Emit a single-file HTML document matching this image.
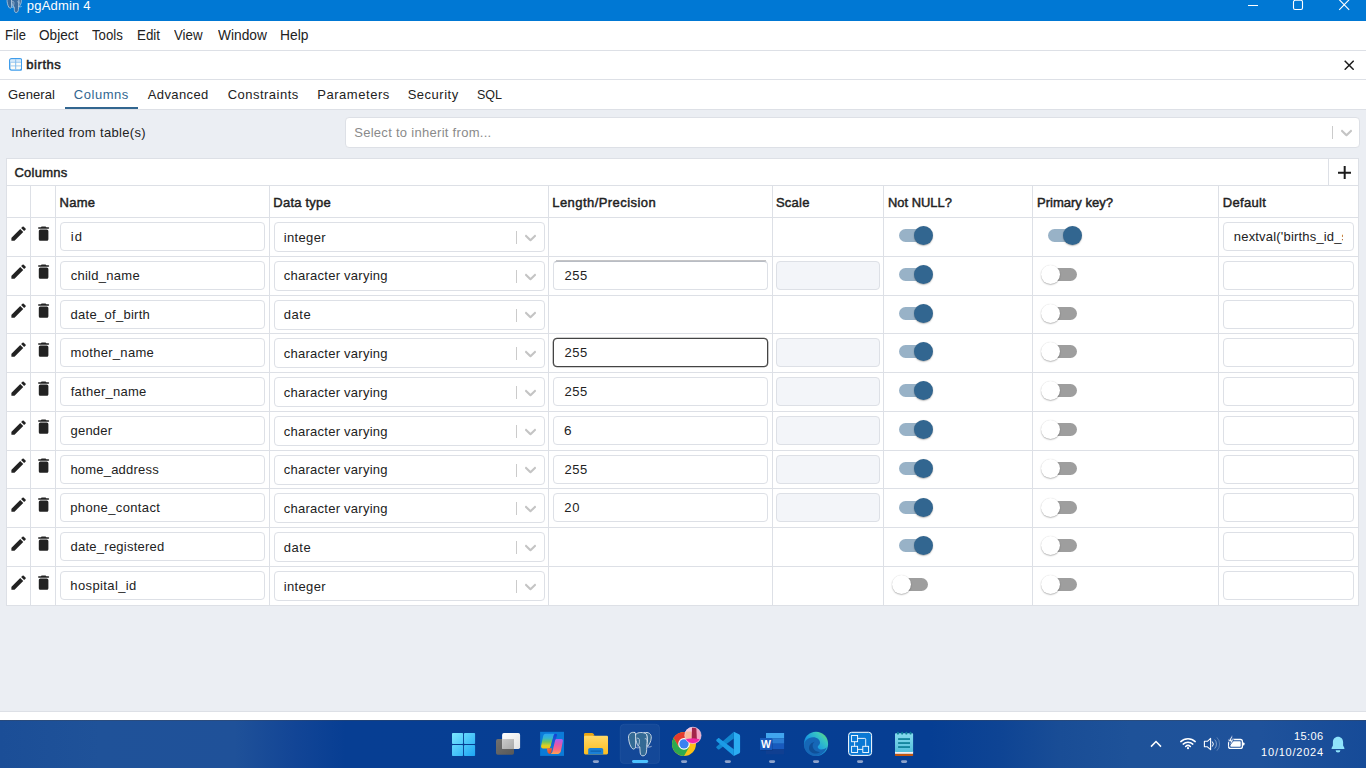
<!DOCTYPE html>
<html lang="en"><head><meta charset="utf-8"><title>pgAdmin 4</title>
<style>
*{box-sizing:border-box;margin:0;padding:0}
html,body{width:1366px;height:768px;overflow:hidden;background:#fff}
body{position:relative;font-family:"Liberation Sans",sans-serif;font-size:13px;color:#222}
.abs,.ic,.hl,.vl,.inp,.trk,.thb,.t{position:absolute}
.t{white-space:nowrap;line-height:1;transform-origin:0 0}
.ttl{font-size:13px;color:#fff}
.menu{font-size:14px;color:#222}
.dt{font-size:13px;font-weight:normal;-webkit-text-stroke:.5px #222;color:#222}
.tab{font-size:13px;color:#222}
.b{font-size:13px;color:#222}
.h{font-size:13px;font-weight:normal;-webkit-text-stroke:.45px #222;color:#222}
.clk{font-size:11px;color:#fff}
#titlebar{position:absolute;left:0;top:0;width:1366px;height:21px;background:#0078d4}
#menubar{position:absolute;left:0;top:21px;width:1366px;height:30px;background:#fff;border-bottom:1px solid #dde0e6}
#dlgtitle{position:absolute;left:0;top:51px;width:1366px;height:29px;background:#fff;border-bottom:1px solid #dde0e6}
#tabs{position:absolute;left:0;top:80px;width:1366px;height:30px;background:#fff;border-bottom:1px solid #dde0e6}
#content{position:absolute;left:0;top:110px;width:1366px;height:601px;background:#ebeef3}
#footline{position:absolute;left:0;top:711px;width:1366px;height:1px;background:#dde0e6}
#taskbar{position:absolute;left:0;top:720px;width:1366px;height:48px;box-shadow:inset 0 1px 0 rgba(60,70,90,.45);background:linear-gradient(90deg,#1b4e97 0px,#1f5299 100px,#1f5199 235px,#124596 295px,#073e93 345px,#063e93 930px,#0e4494 1000px,#194d96 1060px,#1e5299 1130px,#1f529b 1260px,#164b98 1366px)}
#panel{position:absolute;left:6px;top:158px;width:1353px;height:448px;background:#fff;border:1px solid #dde0e6}
.hl{left:7px;width:1351px;height:1px;background:#dde0e6}
.vl{width:1px;background:#dde0e6;top:186px;height:419px}
.inp{height:29px;background:#fff;border:1px solid #dde0e6;border-radius:4px;overflow:hidden}
.inp.dis{background:#f3f5f9}
.inp.foc{border:1px solid #444;box-shadow:0 0 0 .3px #444}
.inp.hov{border-top-color:#b8bcc4}
.sep{position:absolute;top:8px;width:1px;height:13px;background:#cbcbcb}
.trk{width:29px;height:13px;border-radius:7px}
.trk.on{background:#98b2c7}
.trk.off{background:#9e9e9e}
.thb{width:19px;height:19px;border-radius:50%;box-shadow:0 1px 1.500px rgba(0,0,0,.26),0 0 1px rgba(0,0,0,.14)}
.thb.on{background:#326690}
.thb.off{background:#fff}

</style></head><body>
<div id="titlebar">
 <svg class="abs" style="left:0;top:0" width="26" height="15" viewBox="0 0 26 15"><g transform="translate(1.720 -7.540) scale(.03275)" stroke="#c9d8e8" stroke-width="22" fill="#3a6a9c" stroke-linejoin="round" stroke-linecap="round">
<path d="M470 170C540 140 610 190 600 270C595 340 560 400 530 430L515 400C525 330 530 260 510 200C500 185 485 175 470 170Z"/>
<path d="M285 165C220 140 150 190 165 280C175 370 205 450 245 478C270 490 295 470 300 440L300 200C300 180 295 170 285 165Z"/>
<path d="M300 200C330 150 470 150 510 200C530 260 525 330 515 400C510 440 515 470 510 520C505 580 480 612 440 612C400 612 385 575 385 520L380 440C350 430 330 400 320 360C305 310 295 250 300 200Z"/>
<path d="M520 440C550 446 580 442 600 432M330 272C352 262 376 282 373 330C371 380 362 410 346 426M482 282C502 272 530 292 524 332M305 448C325 462 350 462 368 452" fill="none" stroke-width="18"/>
</g></svg>
 <svg class="abs" style="left:1246px;top:0" width="110" height="14" viewBox="0 0 110 14"><path d="M2 5.500h10" stroke="#fff" stroke-width="1"/><rect x="47.500" y=".3" width="9" height="9.200" rx="1.600" fill="none" stroke="#fff" stroke-width="1.100"/><path d="M93.200 -.4l10 10.200M103.200 -.4l-10 10.200" stroke="#fff" stroke-width="1.100"/></svg>
</div>
<div id="menubar"></div>
<div id="dlgtitle"></div>
<svg class="abs" style="left:8.8px;top:58.1px" width="13.400" height="12.800" viewBox="0 0 13.400 12.800"><rect x=".7" y=".7" width="12" height="11.400" rx="1.800" fill="#fdfcf8" stroke="#3f9deb" stroke-width="1.400"/><rect x="1.400" y="1.400" width="10.600" height="2.600" fill="#d6eafb"/><path d="M1.400 4.300h10.600M1.400 7.900h10.600" stroke="#9ccaf0" stroke-width="1"/><path d="M6.700 1.400v10" stroke="#7fbbee" stroke-width="1"/></svg>
<svg class="abs" style="left:1344px;top:59.8px" width="10.400" height="10.400" viewBox="0 0 10.400 10.400"><path d="M.7.7l9 9M9.700.7l-9 9" stroke="#1c1c1c" stroke-width="1.500"/></svg>
<div id="tabs"></div>
<div class="abs" style="left:65px;top:107px;width:73px;height:2px;background:#326690"></div>
<div id="content"></div>
<div class="inp" style="left:345px;top:117px;width:1014.5px;height:30.5px"><i class="sep" style="left:986px;top:8px"></i><svg class="ic" style="left:991px;top:5px" width="19" height="19" viewBox="0 0 20 20"><path fill="#c4c4c4" d="M4.516 7.548c0.436-0.446 1.043-0.481 1.576 0l3.908 3.747 3.908-3.747c0.533-0.481 1.141-0.446 1.574 0 0.436 0.445 0.408 1.197 0 1.615-0.406 0.418-4.695 4.502-4.695 4.502-0.217 0.223-0.502 0.335-0.787 0.335s-0.570-0.112-0.789-0.335c0 0-4.287-4.084-4.695-4.502s-0.436-1.170 0-1.615z"/></svg></div>
<div id="panel"></div>
<div class="hl" style="top:185px"></div>
<div class="abs" style="left:1328px;top:159px;width:1px;height:26px;background:#dde0e6"></div>
<svg class="abs" style="left:1337.6px;top:165.7px" width="13.400" height="13.400" viewBox="0 0 13.400 13.400"><path d="M6.700 0v13.400M0 6.700h13.400" stroke="#1c1c1c" stroke-width="2"/></svg>
<div class="vl" style="left:30px"></div><div class="vl" style="left:55px"></div><div class="vl" style="left:269px"></div><div class="vl" style="left:548px"></div><div class="vl" style="left:772px"></div><div class="vl" style="left:883px"></div><div class="vl" style="left:1032px"></div><div class="vl" style="left:1218px"></div>
<div class="hl" style="top:217.00px"></div>
<svg class="ic" style="left:8.5px;top:223.60px" width="19.200" height="19.200" viewBox="0 0 24 24"><path fill="#222" d="M3 17.46v3.04c0 .28.22.5.5.5h3.04c.13 0 .26-.05.35-.15L17.81 9.940l-3.750-3.750L3.150 17.100c-.1.1-.15.22-.15.36zM20.710 7.040c.39-.39.39-1.020 0-1.410l-2.340-2.340c-.39-.39-1.020-.39-1.410 0l-1.830 1.830 3.750 3.750 1.830-1.830z"/></svg>
<svg class="ic" style="left:33.9px;top:223.50px" width="19.200" height="19.200" viewBox="0 0 24 24"><path fill="#222" d="M6 19c0 1.100.9 2 2 2h8c1.100 0 2-.9 2-2V9c0-1.100-.9-2-2-2H8c-1.100 0-2 .9-2 2v10zM18 4h-2.500l-.71-.71c-.18-.18-.44-.29-.7-.29H9.910c-.26 0-.52.11-.7.29L8.500 4H6c-.55 0-1 .45-1 1s.45 1 1 1h12c.55 0 1-.45 1-1s-.45-1-1-1z"/></svg>
<div class="inp" style="left:60px;top:222.00px;width:205px"></div>
<div class="inp" style="left:274px;top:222.00px;width:271px;height:30px"><i class="sep" style="left:241px"></i><svg class="ic" style="left:246px;top:4.8px" width="19" height="19" viewBox="0 0 20 20"><path fill="#c4c4c4" d="M4.516 7.548c0.436-0.446 1.043-0.481 1.576 0l3.908 3.747 3.908-3.747c0.533-0.481 1.141-0.446 1.574 0 0.436 0.445 0.408 1.197 0 1.615-0.406 0.418-4.695 4.502-4.695 4.502-0.217 0.223-0.502 0.335-0.787 0.335s-0.570-0.112-0.789-0.335c0 0-4.287-4.084-4.695-4.502s-0.436-1.170 0-1.615z"/></svg></div>
<div class="trk on" style="left:899px;top:229.10px"></div><div class="thb on" style="left:914.1px;top:226.10px"></div>
<div class="trk on" style="left:1048px;top:229.10px"></div><div class="thb on" style="left:1063.1px;top:226.10px"></div>
<div class="inp" style="left:1223px;top:222.00px;width:131px"></div>
<div class="hl" style="top:255.78px"></div>
<svg class="ic" style="left:8.5px;top:262.38px" width="19.200" height="19.200" viewBox="0 0 24 24"><path fill="#222" d="M3 17.46v3.04c0 .28.22.5.5.5h3.04c.13 0 .26-.05.35-.15L17.81 9.940l-3.750-3.750L3.150 17.100c-.1.1-.15.22-.15.36zM20.710 7.040c.39-.39.39-1.020 0-1.410l-2.340-2.340c-.39-.39-1.020-.39-1.410 0l-1.830 1.830 3.750 3.750 1.830-1.830z"/></svg>
<svg class="ic" style="left:33.9px;top:262.28px" width="19.200" height="19.200" viewBox="0 0 24 24"><path fill="#222" d="M6 19c0 1.100.9 2 2 2h8c1.100 0 2-.9 2-2V9c0-1.100-.9-2-2-2H8c-1.100 0-2 .9-2 2v10zM18 4h-2.500l-.71-.71c-.18-.18-.44-.29-.7-.29H9.910c-.26 0-.52.11-.7.29L8.500 4H6c-.55 0-1 .45-1 1s.45 1 1 1h12c.55 0 1-.45 1-1s-.45-1-1-1z"/></svg>
<div class="inp" style="left:60px;top:260.78px;width:205px"></div>
<div class="inp" style="left:274px;top:260.78px;width:271px;height:30px"><i class="sep" style="left:241px"></i><svg class="ic" style="left:246px;top:4.8px" width="19" height="19" viewBox="0 0 20 20"><path fill="#c4c4c4" d="M4.516 7.548c0.436-0.446 1.043-0.481 1.576 0l3.908 3.747 3.908-3.747c0.533-0.481 1.141-0.446 1.574 0 0.436 0.445 0.408 1.197 0 1.615-0.406 0.418-4.695 4.502-4.695 4.502-0.217 0.223-0.502 0.335-0.787 0.335s-0.570-0.112-0.789-0.335c0 0-4.287-4.084-4.695-4.502s-0.436-1.170 0-1.615z"/></svg></div>
<div class="inp hov" style="left:553px;top:260.78px;width:215px"></div>
<div class="abs" style="left:556px;top:259.98px;width:210px;height:1px;background:#c4c4c6"></div>
<div class="inp dis" style="left:776px;top:260.78px;width:104px"></div>
<div class="trk on" style="left:899px;top:267.88px"></div><div class="thb on" style="left:914.1px;top:264.88px"></div>
<div class="trk off" style="left:1048px;top:267.88px"></div><div class="thb off" style="left:1040.8px;top:264.88px"></div>
<div class="inp" style="left:1223px;top:260.78px;width:131px"></div>
<div class="hl" style="top:294.56px"></div>
<svg class="ic" style="left:8.5px;top:301.16px" width="19.200" height="19.200" viewBox="0 0 24 24"><path fill="#222" d="M3 17.46v3.04c0 .28.22.5.5.5h3.04c.13 0 .26-.05.35-.15L17.81 9.940l-3.750-3.750L3.150 17.100c-.1.1-.15.22-.15.36zM20.710 7.040c.39-.39.39-1.020 0-1.410l-2.340-2.340c-.39-.39-1.020-.39-1.410 0l-1.830 1.830 3.750 3.750 1.830-1.830z"/></svg>
<svg class="ic" style="left:33.9px;top:301.06px" width="19.200" height="19.200" viewBox="0 0 24 24"><path fill="#222" d="M6 19c0 1.100.9 2 2 2h8c1.100 0 2-.9 2-2V9c0-1.100-.9-2-2-2H8c-1.100 0-2 .9-2 2v10zM18 4h-2.500l-.71-.71c-.18-.18-.44-.29-.7-.29H9.910c-.26 0-.52.11-.7.29L8.500 4H6c-.55 0-1 .45-1 1s.45 1 1 1h12c.55 0 1-.45 1-1s-.45-1-1-1z"/></svg>
<div class="inp" style="left:60px;top:299.56px;width:205px"></div>
<div class="inp" style="left:274px;top:299.56px;width:271px;height:30px"><i class="sep" style="left:241px"></i><svg class="ic" style="left:246px;top:4.8px" width="19" height="19" viewBox="0 0 20 20"><path fill="#c4c4c4" d="M4.516 7.548c0.436-0.446 1.043-0.481 1.576 0l3.908 3.747 3.908-3.747c0.533-0.481 1.141-0.446 1.574 0 0.436 0.445 0.408 1.197 0 1.615-0.406 0.418-4.695 4.502-4.695 4.502-0.217 0.223-0.502 0.335-0.787 0.335s-0.570-0.112-0.789-0.335c0 0-4.287-4.084-4.695-4.502s-0.436-1.170 0-1.615z"/></svg></div>
<div class="trk on" style="left:899px;top:306.66px"></div><div class="thb on" style="left:914.1px;top:303.66px"></div>
<div class="trk off" style="left:1048px;top:306.66px"></div><div class="thb off" style="left:1040.8px;top:303.66px"></div>
<div class="inp" style="left:1223px;top:299.56px;width:131px"></div>
<div class="hl" style="top:333.34px"></div>
<svg class="ic" style="left:8.5px;top:339.94px" width="19.200" height="19.200" viewBox="0 0 24 24"><path fill="#222" d="M3 17.46v3.04c0 .28.22.5.5.5h3.04c.13 0 .26-.05.35-.15L17.81 9.940l-3.750-3.750L3.150 17.100c-.1.1-.15.22-.15.36zM20.710 7.040c.39-.39.39-1.020 0-1.410l-2.340-2.340c-.39-.39-1.020-.39-1.410 0l-1.830 1.830 3.750 3.750 1.830-1.830z"/></svg>
<svg class="ic" style="left:33.9px;top:339.84px" width="19.200" height="19.200" viewBox="0 0 24 24"><path fill="#222" d="M6 19c0 1.100.9 2 2 2h8c1.100 0 2-.9 2-2V9c0-1.100-.9-2-2-2H8c-1.100 0-2 .9-2 2v10zM18 4h-2.500l-.71-.71c-.18-.18-.44-.29-.7-.29H9.910c-.26 0-.52.11-.7.29L8.500 4H6c-.55 0-1 .45-1 1s.45 1 1 1h12c.55 0 1-.45 1-1s-.45-1-1-1z"/></svg>
<div class="inp" style="left:60px;top:338.34px;width:205px"></div>
<div class="inp" style="left:274px;top:338.34px;width:271px;height:30px"><i class="sep" style="left:241px"></i><svg class="ic" style="left:246px;top:4.8px" width="19" height="19" viewBox="0 0 20 20"><path fill="#c4c4c4" d="M4.516 7.548c0.436-0.446 1.043-0.481 1.576 0l3.908 3.747 3.908-3.747c0.533-0.481 1.141-0.446 1.574 0 0.436 0.445 0.408 1.197 0 1.615-0.406 0.418-4.695 4.502-4.695 4.502-0.217 0.223-0.502 0.335-0.787 0.335s-0.570-0.112-0.789-0.335c0 0-4.287-4.084-4.695-4.502s-0.436-1.170 0-1.615z"/></svg></div>
<div class="inp foc" style="left:553px;top:338.34px;width:215px"></div>
<div class="inp dis" style="left:776px;top:338.34px;width:104px"></div>
<div class="trk on" style="left:899px;top:345.44px"></div><div class="thb on" style="left:914.1px;top:342.44px"></div>
<div class="trk off" style="left:1048px;top:345.44px"></div><div class="thb off" style="left:1040.8px;top:342.44px"></div>
<div class="inp" style="left:1223px;top:338.34px;width:131px"></div>
<div class="hl" style="top:372.12px"></div>
<svg class="ic" style="left:8.5px;top:378.72px" width="19.200" height="19.200" viewBox="0 0 24 24"><path fill="#222" d="M3 17.46v3.04c0 .28.22.5.5.5h3.04c.13 0 .26-.05.35-.15L17.81 9.940l-3.750-3.750L3.150 17.100c-.1.1-.15.22-.15.36zM20.710 7.040c.39-.39.39-1.020 0-1.410l-2.340-2.340c-.39-.39-1.020-.39-1.410 0l-1.830 1.830 3.750 3.750 1.830-1.830z"/></svg>
<svg class="ic" style="left:33.9px;top:378.62px" width="19.200" height="19.200" viewBox="0 0 24 24"><path fill="#222" d="M6 19c0 1.100.9 2 2 2h8c1.100 0 2-.9 2-2V9c0-1.100-.9-2-2-2H8c-1.100 0-2 .9-2 2v10zM18 4h-2.500l-.71-.71c-.18-.18-.44-.29-.7-.29H9.910c-.26 0-.52.11-.7.29L8.500 4H6c-.55 0-1 .45-1 1s.45 1 1 1h12c.55 0 1-.45 1-1s-.45-1-1-1z"/></svg>
<div class="inp" style="left:60px;top:377.12px;width:205px"></div>
<div class="inp" style="left:274px;top:377.12px;width:271px;height:30px"><i class="sep" style="left:241px"></i><svg class="ic" style="left:246px;top:4.8px" width="19" height="19" viewBox="0 0 20 20"><path fill="#c4c4c4" d="M4.516 7.548c0.436-0.446 1.043-0.481 1.576 0l3.908 3.747 3.908-3.747c0.533-0.481 1.141-0.446 1.574 0 0.436 0.445 0.408 1.197 0 1.615-0.406 0.418-4.695 4.502-4.695 4.502-0.217 0.223-0.502 0.335-0.787 0.335s-0.570-0.112-0.789-0.335c0 0-4.287-4.084-4.695-4.502s-0.436-1.170 0-1.615z"/></svg></div>
<div class="inp" style="left:553px;top:377.12px;width:215px"></div>
<div class="inp dis" style="left:776px;top:377.12px;width:104px"></div>
<div class="trk on" style="left:899px;top:384.22px"></div><div class="thb on" style="left:914.1px;top:381.22px"></div>
<div class="trk off" style="left:1048px;top:384.22px"></div><div class="thb off" style="left:1040.8px;top:381.22px"></div>
<div class="inp" style="left:1223px;top:377.12px;width:131px"></div>
<div class="hl" style="top:410.90px"></div>
<svg class="ic" style="left:8.5px;top:417.50px" width="19.200" height="19.200" viewBox="0 0 24 24"><path fill="#222" d="M3 17.46v3.04c0 .28.22.5.5.5h3.04c.13 0 .26-.05.35-.15L17.81 9.940l-3.750-3.750L3.150 17.100c-.1.1-.15.22-.15.36zM20.710 7.040c.39-.39.39-1.020 0-1.410l-2.340-2.340c-.39-.39-1.020-.39-1.410 0l-1.830 1.830 3.750 3.750 1.830-1.830z"/></svg>
<svg class="ic" style="left:33.9px;top:417.40px" width="19.200" height="19.200" viewBox="0 0 24 24"><path fill="#222" d="M6 19c0 1.100.9 2 2 2h8c1.100 0 2-.9 2-2V9c0-1.100-.9-2-2-2H8c-1.100 0-2 .9-2 2v10zM18 4h-2.500l-.71-.71c-.18-.18-.44-.29-.7-.29H9.910c-.26 0-.52.11-.7.29L8.500 4H6c-.55 0-1 .45-1 1s.45 1 1 1h12c.55 0 1-.45 1-1s-.45-1-1-1z"/></svg>
<div class="inp" style="left:60px;top:415.90px;width:205px"></div>
<div class="inp" style="left:274px;top:415.90px;width:271px;height:30px"><i class="sep" style="left:241px"></i><svg class="ic" style="left:246px;top:4.8px" width="19" height="19" viewBox="0 0 20 20"><path fill="#c4c4c4" d="M4.516 7.548c0.436-0.446 1.043-0.481 1.576 0l3.908 3.747 3.908-3.747c0.533-0.481 1.141-0.446 1.574 0 0.436 0.445 0.408 1.197 0 1.615-0.406 0.418-4.695 4.502-4.695 4.502-0.217 0.223-0.502 0.335-0.787 0.335s-0.570-0.112-0.789-0.335c0 0-4.287-4.084-4.695-4.502s-0.436-1.170 0-1.615z"/></svg></div>
<div class="inp" style="left:553px;top:415.90px;width:215px"></div>
<div class="inp dis" style="left:776px;top:415.90px;width:104px"></div>
<div class="trk on" style="left:899px;top:423.00px"></div><div class="thb on" style="left:914.1px;top:420.00px"></div>
<div class="trk off" style="left:1048px;top:423.00px"></div><div class="thb off" style="left:1040.8px;top:420.00px"></div>
<div class="inp" style="left:1223px;top:415.90px;width:131px"></div>
<div class="hl" style="top:449.68px"></div>
<svg class="ic" style="left:8.5px;top:456.28px" width="19.200" height="19.200" viewBox="0 0 24 24"><path fill="#222" d="M3 17.46v3.04c0 .28.22.5.5.5h3.04c.13 0 .26-.05.35-.15L17.81 9.940l-3.750-3.750L3.150 17.100c-.1.1-.15.22-.15.36zM20.710 7.040c.39-.39.39-1.020 0-1.410l-2.340-2.340c-.39-.39-1.020-.39-1.410 0l-1.830 1.830 3.750 3.750 1.830-1.830z"/></svg>
<svg class="ic" style="left:33.9px;top:456.18px" width="19.200" height="19.200" viewBox="0 0 24 24"><path fill="#222" d="M6 19c0 1.100.9 2 2 2h8c1.100 0 2-.9 2-2V9c0-1.100-.9-2-2-2H8c-1.100 0-2 .9-2 2v10zM18 4h-2.500l-.71-.71c-.18-.18-.44-.29-.7-.29H9.910c-.26 0-.52.11-.7.29L8.500 4H6c-.55 0-1 .45-1 1s.45 1 1 1h12c.55 0 1-.45 1-1s-.45-1-1-1z"/></svg>
<div class="inp" style="left:60px;top:454.68px;width:205px"></div>
<div class="inp" style="left:274px;top:454.68px;width:271px;height:30px"><i class="sep" style="left:241px"></i><svg class="ic" style="left:246px;top:4.8px" width="19" height="19" viewBox="0 0 20 20"><path fill="#c4c4c4" d="M4.516 7.548c0.436-0.446 1.043-0.481 1.576 0l3.908 3.747 3.908-3.747c0.533-0.481 1.141-0.446 1.574 0 0.436 0.445 0.408 1.197 0 1.615-0.406 0.418-4.695 4.502-4.695 4.502-0.217 0.223-0.502 0.335-0.787 0.335s-0.570-0.112-0.789-0.335c0 0-4.287-4.084-4.695-4.502s-0.436-1.170 0-1.615z"/></svg></div>
<div class="inp" style="left:553px;top:454.68px;width:215px"></div>
<div class="inp dis" style="left:776px;top:454.68px;width:104px"></div>
<div class="trk on" style="left:899px;top:461.78px"></div><div class="thb on" style="left:914.1px;top:458.78px"></div>
<div class="trk off" style="left:1048px;top:461.78px"></div><div class="thb off" style="left:1040.8px;top:458.78px"></div>
<div class="inp" style="left:1223px;top:454.68px;width:131px"></div>
<div class="hl" style="top:488.46px"></div>
<svg class="ic" style="left:8.5px;top:495.06px" width="19.200" height="19.200" viewBox="0 0 24 24"><path fill="#222" d="M3 17.46v3.04c0 .28.22.5.5.5h3.04c.13 0 .26-.05.35-.15L17.81 9.940l-3.750-3.750L3.150 17.100c-.1.1-.15.22-.15.36zM20.710 7.040c.39-.39.39-1.020 0-1.410l-2.340-2.340c-.39-.39-1.020-.39-1.410 0l-1.830 1.830 3.750 3.750 1.830-1.830z"/></svg>
<svg class="ic" style="left:33.9px;top:494.96px" width="19.200" height="19.200" viewBox="0 0 24 24"><path fill="#222" d="M6 19c0 1.100.9 2 2 2h8c1.100 0 2-.9 2-2V9c0-1.100-.9-2-2-2H8c-1.100 0-2 .9-2 2v10zM18 4h-2.500l-.71-.71c-.18-.18-.44-.29-.7-.29H9.910c-.26 0-.52.11-.7.29L8.500 4H6c-.55 0-1 .45-1 1s.45 1 1 1h12c.55 0 1-.45 1-1s-.45-1-1-1z"/></svg>
<div class="inp" style="left:60px;top:493.46px;width:205px"></div>
<div class="inp" style="left:274px;top:493.46px;width:271px;height:30px"><i class="sep" style="left:241px"></i><svg class="ic" style="left:246px;top:4.8px" width="19" height="19" viewBox="0 0 20 20"><path fill="#c4c4c4" d="M4.516 7.548c0.436-0.446 1.043-0.481 1.576 0l3.908 3.747 3.908-3.747c0.533-0.481 1.141-0.446 1.574 0 0.436 0.445 0.408 1.197 0 1.615-0.406 0.418-4.695 4.502-4.695 4.502-0.217 0.223-0.502 0.335-0.787 0.335s-0.570-0.112-0.789-0.335c0 0-4.287-4.084-4.695-4.502s-0.436-1.170 0-1.615z"/></svg></div>
<div class="inp" style="left:553px;top:493.46px;width:215px"></div>
<div class="inp dis" style="left:776px;top:493.46px;width:104px"></div>
<div class="trk on" style="left:899px;top:500.56px"></div><div class="thb on" style="left:914.1px;top:497.56px"></div>
<div class="trk off" style="left:1048px;top:500.56px"></div><div class="thb off" style="left:1040.8px;top:497.56px"></div>
<div class="inp" style="left:1223px;top:493.46px;width:131px"></div>
<div class="hl" style="top:527.24px"></div>
<svg class="ic" style="left:8.5px;top:533.84px" width="19.200" height="19.200" viewBox="0 0 24 24"><path fill="#222" d="M3 17.46v3.04c0 .28.22.5.5.5h3.04c.13 0 .26-.05.35-.15L17.81 9.940l-3.750-3.750L3.150 17.100c-.1.1-.15.22-.15.36zM20.710 7.040c.39-.39.39-1.020 0-1.410l-2.340-2.340c-.39-.39-1.020-.39-1.410 0l-1.830 1.830 3.750 3.750 1.830-1.830z"/></svg>
<svg class="ic" style="left:33.9px;top:533.74px" width="19.200" height="19.200" viewBox="0 0 24 24"><path fill="#222" d="M6 19c0 1.100.9 2 2 2h8c1.100 0 2-.9 2-2V9c0-1.100-.9-2-2-2H8c-1.100 0-2 .9-2 2v10zM18 4h-2.500l-.71-.71c-.18-.18-.44-.29-.7-.29H9.910c-.26 0-.52.11-.7.29L8.500 4H6c-.55 0-1 .45-1 1s.45 1 1 1h12c.55 0 1-.45 1-1s-.45-1-1-1z"/></svg>
<div class="inp" style="left:60px;top:532.24px;width:205px"></div>
<div class="inp" style="left:274px;top:532.24px;width:271px;height:30px"><i class="sep" style="left:241px"></i><svg class="ic" style="left:246px;top:4.8px" width="19" height="19" viewBox="0 0 20 20"><path fill="#c4c4c4" d="M4.516 7.548c0.436-0.446 1.043-0.481 1.576 0l3.908 3.747 3.908-3.747c0.533-0.481 1.141-0.446 1.574 0 0.436 0.445 0.408 1.197 0 1.615-0.406 0.418-4.695 4.502-4.695 4.502-0.217 0.223-0.502 0.335-0.787 0.335s-0.570-0.112-0.789-0.335c0 0-4.287-4.084-4.695-4.502s-0.436-1.170 0-1.615z"/></svg></div>
<div class="trk on" style="left:899px;top:539.34px"></div><div class="thb on" style="left:914.1px;top:536.34px"></div>
<div class="trk off" style="left:1048px;top:539.34px"></div><div class="thb off" style="left:1040.8px;top:536.34px"></div>
<div class="inp" style="left:1223px;top:532.24px;width:131px"></div>
<div class="hl" style="top:566.02px"></div>
<svg class="ic" style="left:8.5px;top:572.62px" width="19.200" height="19.200" viewBox="0 0 24 24"><path fill="#222" d="M3 17.46v3.04c0 .28.22.5.5.5h3.04c.13 0 .26-.05.35-.15L17.81 9.940l-3.750-3.750L3.150 17.100c-.1.1-.15.22-.15.36zM20.710 7.040c.39-.39.39-1.020 0-1.410l-2.340-2.340c-.39-.39-1.020-.39-1.410 0l-1.830 1.830 3.750 3.750 1.830-1.830z"/></svg>
<svg class="ic" style="left:33.9px;top:572.52px" width="19.200" height="19.200" viewBox="0 0 24 24"><path fill="#222" d="M6 19c0 1.100.9 2 2 2h8c1.100 0 2-.9 2-2V9c0-1.100-.9-2-2-2H8c-1.100 0-2 .9-2 2v10zM18 4h-2.500l-.71-.71c-.18-.18-.44-.29-.7-.29H9.910c-.26 0-.52.11-.7.29L8.500 4H6c-.55 0-1 .45-1 1s.45 1 1 1h12c.55 0 1-.45 1-1s-.45-1-1-1z"/></svg>
<div class="inp" style="left:60px;top:571.02px;width:205px"></div>
<div class="inp" style="left:274px;top:571.02px;width:271px;height:30px"><i class="sep" style="left:241px"></i><svg class="ic" style="left:246px;top:4.8px" width="19" height="19" viewBox="0 0 20 20"><path fill="#c4c4c4" d="M4.516 7.548c0.436-0.446 1.043-0.481 1.576 0l3.908 3.747 3.908-3.747c0.533-0.481 1.141-0.446 1.574 0 0.436 0.445 0.408 1.197 0 1.615-0.406 0.418-4.695 4.502-4.695 4.502-0.217 0.223-0.502 0.335-0.787 0.335s-0.570-0.112-0.789-0.335c0 0-4.287-4.084-4.695-4.502s-0.436-1.170 0-1.615z"/></svg></div>
<div class="trk off" style="left:899px;top:578.12px"></div><div class="thb off" style="left:891.8px;top:575.12px"></div>
<div class="trk off" style="left:1048px;top:578.12px"></div><div class="thb off" style="left:1040.8px;top:575.12px"></div>
<div class="inp" style="left:1223px;top:571.02px;width:131px"></div>
<div class="abs" style="left:1231.7px;top:224.00px;width:110.9px;height:24px;overflow:hidden"><div class="t b" style="left:2.14px;top:6px;letter-spacing:0.185px;">nextval('births_id_seq'::regclass)</div></div>
<div id="footline"></div>
<div id="taskbar">
<svg class="abs" style="left:0;top:0" width="1366" height="48" viewBox="0 720 1366 48">
<defs>
<linearGradient id="gw" gradientUnits="userSpaceOnUse" x1="452" y1="733" x2="475" y2="756"><stop offset="0" stop-color="#7be6ff"/><stop offset="1" stop-color="#1ca6f4"/></linearGradient>
<linearGradient id="gtv1" x1="0" y1="0" x2="1" y2="1"><stop offset="0" stop-color="#ffffff"/><stop offset="1" stop-color="#e2e2e2"/></linearGradient>
<linearGradient id="gtv2" x1="0" y1="0" x2="1" y2="1"><stop offset="0" stop-color="#707070"/><stop offset="1" stop-color="#585858"/></linearGradient>
<linearGradient id="gtv3" x1="0" y1="0" x2="1" y2="1"><stop offset="0" stop-color="#c9c9c9"/><stop offset="1" stop-color="#a9a9a9"/></linearGradient>
<linearGradient id="gfold" x1="0" y1="0" x2="0" y2="1"><stop offset="0" stop-color="#ffd968"/><stop offset="1" stop-color="#fbbd1f"/></linearGradient>
<linearGradient id="gcp1" x1="0" y1="0" x2="0" y2="1"><stop offset="0" stop-color="#2aa2f6"/><stop offset=".3" stop-color="#35b6d0"/><stop offset=".55" stop-color="#6cc465"/><stop offset=".8" stop-color="#d9cf24"/><stop offset="1" stop-color="#f7c40e"/></linearGradient><linearGradient id="gcp3" x1="0" y1="0" x2="0" y2="1"><stop offset="0" stop-color="#1a3cd2"/><stop offset=".5" stop-color="#1560d6"/><stop offset="1" stop-color="#0b7bd8"/></linearGradient><linearGradient id="gcp4" x1="0" y1="0" x2="1" y2="1"><stop offset="0" stop-color="#fb7a35"/><stop offset="1" stop-color="#e83a2a"/></linearGradient>
<linearGradient id="gcp2" x1="0" y1="0" x2="0" y2="1"><stop offset="0" stop-color="#a860f2"/><stop offset=".35" stop-color="#e058b0"/><stop offset=".7" stop-color="#fb6a80"/><stop offset="1" stop-color="#ffa552"/></linearGradient>
<linearGradient id="gedge" x1="0" y1="1" x2="1" y2="0"><stop offset="0" stop-color="#0c59a4"/><stop offset=".45" stop-color="#1b9de2"/><stop offset=".75" stop-color="#38c6c0"/><stop offset="1" stop-color="#7be04a"/></linearGradient>
<linearGradient id="gnote" x1="0" y1="0" x2="0" y2="1"><stop offset="0" stop-color="#86dcee"/><stop offset="1" stop-color="#54bfdc"/></linearGradient>
<clipPath id="cav"><circle cx="692.9" cy="735.4" r="8.2"/></clipPath>
</defs>
<!-- start -->
<g fill="url(#gw)"><rect x="452" y="733" width="11.100" height="11" rx=".8"/><rect x="464" y="733" width="11.100" height="11" rx=".8"/><rect x="452" y="745" width="11.100" height="11" rx=".8"/><rect x="464" y="745" width="11.100" height="11" rx=".8"/></g>
<!-- task view -->
<rect x="496" y="739.100" width="18" height="15.700" rx="1.800" fill="url(#gtv2)"/>
<rect x="502.100" y="733.100" width="18" height="15.900" rx="1.800" fill="url(#gtv1)"/>
<rect x="502.100" y="739.100" width="11.900" height="9.900" fill="url(#gtv3)"/>
<!-- copilot -->
<rect x="540.100" y="731.800" width="23.900" height="24.100" fill="#0b7bd8"/>
<g transform="translate(532 724) scale(.052083)">
<path d="M262 185H405C420 185 425 195 420 210L355 440C350 460 335 470 315 470H215C185 470 170 450 175 420L215 230C222 200 240 185 262 185Z" fill="url(#gcp1)"/>
<path d="M445 190C470 185 485 200 478 225L400 480C395 500 380 505 365 500L330 465C345 460 352 450 357 435L415 225C420 205 430 193 445 190Z" fill="url(#gcp3)"/>
<path d="M470 290H560C585 290 597 305 592 330L555 520C548 555 525 575 495 575H355C375 570 385 555 392 535L440 330C446 305 455 290 470 290Z" fill="url(#gcp2)"/>
<path d="M285 465H385L372 540C368 562 352 575 335 575C315 572 300 555 296 530Z" fill="url(#gcp4)"/>
</g>
<!-- explorer -->
<path d="M584 734.600c0-.9.600-1.500 1.500-1.500h6.300c.8 0 1.300.3 1.800.9l1.100 1.500h-10.700z" fill="#e9a512"/>
<rect x="584" y="733.800" width="9.500" height="4" fill="#e9a512"/>
<path d="M584 737c0-.8.600-1.300 1.400-1.300h21.200c.8 0 1.400.5 1.400 1.300v16.100c0 .8-.6 1.400-1.400 1.400h-21.200c-.8 0-1.400-.6-1.400-1.400z" fill="url(#gfold)"/>
<path d="M588.200 749.800c0-1 .8-1.800 1.800-1.800h11.400c1 0 1.800.8 1.800 1.800v4.700h-15z" fill="#1a80d6"/>
<rect x="590.500" y="750.500" width="10.500" height="1.300" fill="#0f63b0"/>
<rect x="592.900" y="760.200" width="6.100" height="2.800" rx="1.400" fill="#8da3cb"/>
<!-- pgadmin tile -->
<rect x="620.200" y="724.200" width="39.400" height="39.400" rx="4" fill="#ffffff" fill-opacity=".055" stroke="#ffffff" stroke-opacity=".06"/>
<g transform="translate(620 724) scale(.052083)" stroke="#dbe4ee" stroke-width="17" fill="#346a94" stroke-linejoin="round" stroke-linecap="round">
<path d="M470 170C540 140 610 190 600 270C595 340 560 400 530 430L515 400C525 330 530 260 510 200C500 185 485 175 470 170Z"/>
<path d="M285 165C220 140 150 190 165 280C175 370 205 450 245 478C270 490 295 470 300 440L300 200C300 180 295 170 285 165Z"/>
<path d="M300 200C330 150 470 150 510 200C530 260 525 330 515 400C510 440 515 470 510 520C505 580 480 612 440 612C400 612 385 575 385 520L380 440C350 430 330 400 320 360C305 310 295 250 300 200Z"/>
<path d="M520 440C550 446 580 442 600 432M330 272C352 262 376 282 373 330C371 380 362 410 346 426M482 282C502 272 530 292 524 332M305 448C325 462 350 462 368 452" fill="none" stroke-width="14"/>
</g>
<rect x="632" y="760.100" width="16.200" height="2.900" rx="1.450" fill="#4cc2ff"/>
<!-- chrome -->
<circle cx="684" cy="743.900" r="12" fill="#fbc116"/>
<path d="M673.610 737.900A12 12 0 0 1 694.390 737.900L684 737.900L684 743.900L678.800 746.900Z" fill="#e33b2e"/>
<path d="M673.610 737.900L678.800 746.900L684 743.900L689.200 746.900L684 755.900A12 12 0 0 1 673.610 737.900Z" fill="#2da94f"/>
<circle cx="684" cy="743.900" r="5.800" fill="#fff"/>
<circle cx="684" cy="743.900" r="4.650" fill="#3b82f1"/>
<g clip-path="url(#cav)"><rect x="684" y="727" width="18" height="17" fill="#f3a5c6"/><path d="M684 727h8v5h-8z" fill="#f6c4de"/><path d="M685 731.500h6.500v7h-6.500z" fill="#f9b99c"/><path d="M692 727.500h4.300l.6 12h-5.200z" fill="#a3244a"/><path d="M684 739.300l9.500-1 8.500 1.200v6h-18z" fill="#f127a4"/></g>
<circle cx="692.900" cy="735.400" r="8.200" fill="none" stroke="#f5d6e4" stroke-width=".6"/>
<rect x="681" y="760.200" width="6.100" height="2.800" rx="1.400" fill="#8da3cb"/>
<!-- vscode -->
<path d="M733.800 731.800l5.200 2.500c.7.300 1.100 1 1.100 1.800v15.600c0 .8-.4 1.500-1.100 1.800l-5.200 2.400z" fill="#2badf2"/>

<path d="M733.800 731.800l-17.200 14.700c-.5.500-.5 1.200 0 1.600l1.300 1.200c.5.400 1.100.4 1.600 0l14.300-10.900z" fill="#1187d0"/>
<path d="M733.800 755.900l-17.200-14.700c-.5-.5-.5-1.200 0-1.600l1.300-1.200c.5-.4 1.100-.4 1.600 0l14.300 10.900z" fill="#1b9be6"/>
<rect x="724.800" y="760.200" width="6.100" height="2.800" rx="1.400" fill="#8da3cb"/>
<!-- word -->
<rect x="766" y="733" width="18.100" height="5.400" fill="#41a5ee"/><rect x="766" y="738.400" width="18.100" height="5.300" fill="#2b7cd3"/><rect x="766" y="743.700" width="18.100" height="5.300" fill="#185abd"/><rect x="766" y="749" width="18.100" height="5.300" fill="#103f91"/>
<rect x="760.600" y="738.800" width="12" height="11.800" fill="#0a2f6e" fill-opacity=".45"/>
<rect x="760" y="738.100" width="12" height="11.800" fill="#185abd"/>
<text x="766" y="747.900" text-anchor="middle" font-family="Liberation Sans, sans-serif" font-weight="bold" font-size="10.500" fill="#fff">W</text>
<rect x="769" y="760.200" width="6.100" height="2.800" rx="1.400" fill="#8da3cb"/>
<!-- edge -->
<circle cx="816" cy="743.900" r="12.100" fill="url(#gedge)"/>
<path d="M804.200 746c-.3-5 3.800-8.800 8.800-8.800 4.200 0 7 2.500 7 5.300 0 1.500-.7 2.400-1.500 3 0 0-1.500 1.200-.3 2.700 1.500 1.900 6 1.600 8.500-.6-1.500 5-6.500 8.400-11 8.300-6.200-.1-11.200-4.500-11.500-9.900z" fill="#1667b7"/>
<path d="M809 748.500c0-3.500 2.300-6 5.500-6.800-1.700 1.500-2.300 3.600-1.600 5.800.9 2.800 3.700 4.600 7.100 4.400-1.700 1.500-4 2-6 1.500-3-.7-5-2.600-5-4.900z" fill="#0f4f98"/>
<rect x="813" y="760.200" width="6.100" height="2.800" rx="1.400" fill="#8da3cb"/>
<!-- erd -->
<rect x="848.600" y="732.300" width="23" height="23.100" rx="3" fill="#0a78d4" stroke="#fff" stroke-width="1"/>
<g fill="none" stroke="#fff" stroke-width=".9"><rect x="851.600" y="735.500" width="6" height="6.200"/><rect x="851.600" y="746.300" width="6" height="6.200"/><rect x="862.800" y="746.300" width="5.800" height="6.200"/><path d="M857.600 738.400h7.200c.6 0 .9.300.9.900v7M854.600 741.700v4.600M857.600 749.400h5.200"/></g>
<rect x="857" y="760.200" width="6.100" height="2.800" rx="1.400" fill="#8da3cb"/>
<!-- notepad -->
<rect x="895" y="753.400" width="18.100" height="2.500" rx=".6" fill="#c5570f"/>
<rect x="895" y="751" width="18.100" height="2.800" fill="#f1f1f1"/>
<rect x="895" y="733.200" width="18.100" height="18.900" rx=".8" fill="url(#gnote)"/>
<g fill="#0d7f98"><rect x="898.100" y="738.200" width="11.900" height="1.700"/><rect x="898.100" y="742.200" width="11.900" height="1.700"/><rect x="898.100" y="746.200" width="11.900" height="1.700"/>
<rect x="897" y="731.800" width="1.900" height="2.800" rx=".9"/><rect x="901.200" y="731.800" width="1.900" height="2.800" rx=".9"/><rect x="905.400" y="731.800" width="1.900" height="2.800" rx=".9"/><rect x="909.600" y="731.800" width="1.900" height="2.800" rx=".9"/></g>
<rect x="901" y="760.200" width="6.100" height="2.800" rx="1.400" fill="#8da3cb"/>
<!-- tray chevron -->
<path d="M1151 746.600l5-5.100 5 5.100" fill="none" stroke="#fff" stroke-width="1.500"/>
<!-- wifi -->
<g fill="none" stroke="#fff" stroke-width="1.500" stroke-linecap="round"><path d="M1180.800 741.600a10.300 10.300 0 0 1 14.400 0"/><path d="M1183.200 744.100a6.900 6.900 0 0 1 9.600 0"/><path d="M1185.600 746.500a3.500 3.500 0 0 1 4.800 0"/></g>
<circle cx="1188" cy="748.200" r="1.100" fill="#fff"/>
<!-- volume -->
<path d="M1204.400 741.300h3l3.200-2.900v11.300l-3.200-2.900h-3z" fill="none" stroke="#fff" stroke-width="1.100" stroke-linejoin="round"/>
<path d="M1212.500 741.800a3.400 3.400 0 0 1 0 4.500" fill="none" stroke="#fff" stroke-width="1" stroke-linecap="round"/>
<path d="M1214.700 739.600a6.500 6.500 0 0 1 0 8.900" fill="none" stroke="#fff" stroke-opacity=".45" stroke-width="1"/>
<path d="M1216.900 737.400a9.600 9.600 0 0 1 0 13.300" fill="none" stroke="#fff" stroke-opacity=".25" stroke-width="1"/>
<!-- battery -->
<rect x="1228.600" y="739.500" width="13.800" height="8.900" rx="2" fill="none" stroke="#fff" stroke-width="1.300"/>
<rect x="1230.300" y="741.200" width="10.400" height="5.500" rx=".8" fill="#fff"/>
<path d="M1242.900 742.400h.7c.5 0 .9.400.9.900v1.300c0 .5-.4.900-.9.900h-.7z" fill="#fff"/>
<path d="M1231.600 735.800l-3.600 5.900h2.700l-1.500 4.500 4.700-6.300h-2.700l1.800-4.100z" fill="#fff" stroke="#1f4f9c" stroke-width=".8"/>
<!-- bell -->
<path d="M1338 736.800c-3 0-5.100 2.300-5.100 5.200v3.400l-1.300 2.600c-.2.500.1 1 .6 1h11.600c.5 0 .8-.5.600-1l-1.300-2.600v-3.400c0-2.900-2.100-5.200-5.100-5.200z" fill="#8fe3fb"/>
<path d="M1335.600 750.200a2.400 2.400 0 0 0 4.800 0z" fill="#8fe3fb"/>
</svg>

</div>
<div class="t ttl" style="left:26.85px;top:-1.50px;letter-spacing:0.181px;">pgAdmin 4</div>
<div class="t menu" style="left:4.87px;top:28.00px;transform:scaleX(0.9269);">File</div>
<div class="t menu" style="left:38.96px;top:28.00px;transform:scaleX(0.9710);">Object</div>
<div class="t menu" style="left:91.82px;top:28.00px;transform:scaleX(0.9444);">Tools</div>
<div class="t menu" style="left:136.75px;top:28.00px;transform:scaleX(0.9528);">Edit</div>
<div class="t menu" style="left:173.96px;top:28.00px;transform:scaleX(0.9488);">View</div>
<div class="t menu" style="left:217.95px;top:28.00px;transform:scaleX(0.9811);">Window</div>
<div class="t menu" style="left:280.23px;top:28.00px;transform:scaleX(0.9854);">Help</div>
<div class="t dt" style="left:26.37px;top:58.00px;letter-spacing:0.531px;">births</div>
<div class="t tab" style="left:8.12px;top:87.50px;letter-spacing:0.091px;">General</div>
<div class="t tab" style="left:73.81px;top:87.50px;letter-spacing:0.544px;color:#326690">Columns</div>
<div class="t tab" style="left:147.79px;top:87.50px;letter-spacing:0.390px;">Advanced</div>
<div class="t tab" style="left:227.65px;top:87.50px;letter-spacing:0.486px;">Constraints</div>
<div class="t tab" style="left:317.19px;top:87.50px;letter-spacing:0.555px;">Parameters</div>
<div class="t tab" style="left:407.70px;top:87.50px;letter-spacing:0.509px;">Security</div>
<div class="t tab" style="left:477.00px;top:87.50px;transform:scaleX(0.9616);">SQL</div>
<div class="t b" style="left:11.26px;top:126.00px;letter-spacing:0.327px;">Inherited from table(s)</div>
<div class="t b" style="left:354.19px;top:126.00px;letter-spacing:0.290px;color:#8a8a8a">Select to inherit from...</div>
<div class="t h" style="left:14.48px;top:166.00px;letter-spacing:0.243px;">Columns</div>
<div class="t h" style="left:59.62px;top:196.00px;letter-spacing:0.263px;">Name</div>
<div class="t h" style="left:273.36px;top:196.00px;letter-spacing:0.219px;">Data type</div>
<div class="t h" style="left:552.23px;top:196.00px;letter-spacing:0.446px;">Length/Precision</div>
<div class="t h" style="left:775.95px;top:196.00px;letter-spacing:0.238px;">Scale</div>
<div class="t h" style="left:888.31px;top:196.00px;transform:scaleX(0.9924);">Not NULL?</div>
<div class="t h" style="left:1036.70px;top:196.00px;transform:scaleX(1.0014);">Primary key?</div>
<div class="t h" style="left:1222.75px;top:196.00px;letter-spacing:0.330px;">Default</div>
<div class="t b" style="left:70.63px;top:230.00px;letter-spacing:1.306px;">id</div>
<div class="t b" style="left:283.65px;top:230.70px;letter-spacing:0.374px;">integer</div>
<div class="t b" style="left:70.66px;top:268.78px;letter-spacing:0.280px;">child_name</div>
<div class="t b" style="left:283.84px;top:269.48px;letter-spacing:0.248px;">character varying</div>
<div class="t b" style="left:564.41px;top:268.78px;letter-spacing:0.510px;">255</div>
<div class="t b" style="left:70.59px;top:307.56px;letter-spacing:0.279px;">date_of_birth</div>
<div class="t b" style="left:283.85px;top:308.26px;letter-spacing:0.502px;">date</div>
<div class="t b" style="left:70.55px;top:346.34px;letter-spacing:0.304px;">mother_name</div>
<div class="t b" style="left:283.84px;top:347.04px;letter-spacing:0.248px;">character varying</div>
<div class="t b" style="left:564.41px;top:346.34px;letter-spacing:0.510px;">255</div>
<div class="t b" style="left:70.74px;top:385.12px;letter-spacing:0.247px;">father_name</div>
<div class="t b" style="left:283.84px;top:385.82px;letter-spacing:0.248px;">character varying</div>
<div class="t b" style="left:564.41px;top:385.12px;letter-spacing:0.510px;">255</div>
<div class="t b" style="left:70.59px;top:423.90px;letter-spacing:0.181px;">gender</div>
<div class="t b" style="left:283.84px;top:424.60px;letter-spacing:0.248px;">character varying</div>
<div class="t b" style="left:563.91px;top:423.90px;transform:scaleX(1.0426);">6</div>
<div class="t b" style="left:70.40px;top:462.68px;letter-spacing:0.207px;">home_address</div>
<div class="t b" style="left:283.84px;top:463.38px;letter-spacing:0.248px;">character varying</div>
<div class="t b" style="left:564.41px;top:462.68px;letter-spacing:0.510px;">255</div>
<div class="t b" style="left:70.26px;top:501.46px;letter-spacing:0.361px;">phone_contact</div>
<div class="t b" style="left:283.84px;top:502.16px;letter-spacing:0.248px;">character varying</div>
<div class="t b" style="left:564.28px;top:501.46px;letter-spacing:0.874px;">20</div>
<div class="t b" style="left:70.59px;top:540.24px;letter-spacing:0.240px;">date_registered</div>
<div class="t b" style="left:283.85px;top:540.94px;letter-spacing:0.502px;">date</div>
<div class="t b" style="left:70.30px;top:579.02px;letter-spacing:0.390px;">hospital_id</div>
<div class="t b" style="left:283.65px;top:579.72px;letter-spacing:0.374px;">integer</div>
<div class="t clk" style="left:1293.98px;top:731.00px;letter-spacing:0.407px;">15:06</div>
<div class="t clk" style="left:1261.10px;top:747.00px;letter-spacing:0.775px;">10/10/2024</div>
</body></html>
